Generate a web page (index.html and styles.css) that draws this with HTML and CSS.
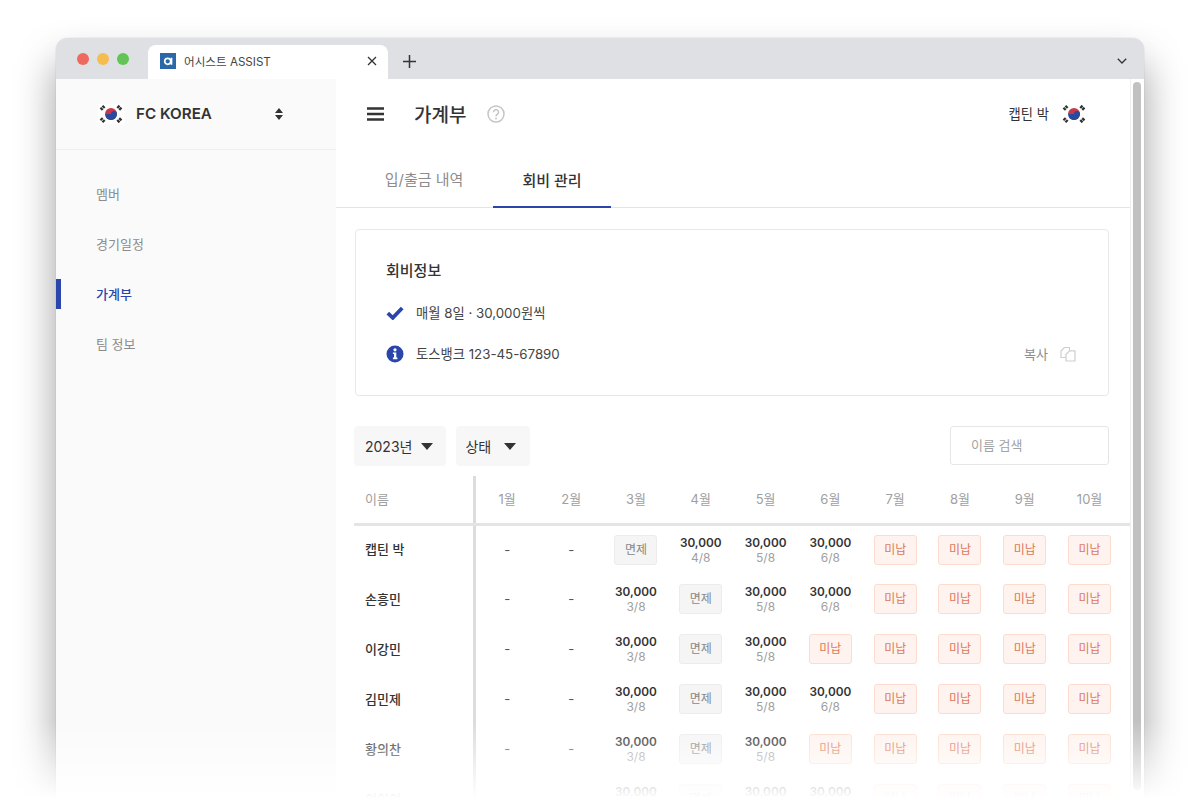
FILE: index.html
```html
<!DOCTYPE html>
<html lang="ko">
<head>
  <meta charset="UTF-8" />
  <meta name="viewport" content="width=device-width, initial-scale=1" />
  <title>어시스트 ASSIST</title>
  <link rel="stylesheet" href="styles.css">
</head>
<body>
  <svg class="svg-defs" width="0" height="0">
    <symbol id="flag" viewBox="0 0 26 20">
      <rect width="26" height="20" fill="#fff"/>
      <path d="M7 10a6 6 0 0 1 12 0z" fill="#c8384a"/>
      <path d="M7 10a6 6 0 0 0 12 0z" fill="#2b4a9c"/>
      <path d="M7 10a3 3 0 0 0 6 0a3 3 0 0 1 6 0a6 6 0 0 1-12 0z" fill="#2b4a9c"/>
      <g stroke="#333" stroke-width="3.200" stroke-dasharray="2.200 .6">
        <path d="M2.800 5.600L6.400 2M19.600 2l3.600 3.600M2.800 14.400L6.400 18M19.600 18l3.600-3.600"/>
      </g>
    </symbol>
  </svg>

  <div class="window">
    <div class="tabbar">
      <div class="lights">
        <span class="light red"></span>
        <span class="light yellow"></span>
        <span class="light green"></span>
      </div>
      <div class="browser-tab">
        <svg class="favicon" width="16" height="16" viewBox="0 0 16 16">
          <rect width="16" height="16" fill="#2a68a8"/>
          <circle cx="7.700" cy="8.300" r="3" stroke="#fff" stroke-width="1.700" fill="none"/>
          <path d="M11.500 4.700v7" stroke="#fff" stroke-width="1.700"/>
        </svg>
        <span class="browser-tab-title">어시스트 ASSIST</span>
        <svg class="tab-close" width="10" height="10" viewBox="0 0 10 10"><path d="M1 1l8 8M9 1l-8 8" stroke="#333" stroke-width="1.300" fill="none"/></svg>
      </div>
      <svg class="tab-new" width="13" height="13" viewBox="0 0 13 13"><path d="M6.500 0v13M0 6.500h13" stroke="#333" stroke-width="1.500" fill="none"/></svg>
      <svg class="tab-more" width="10" height="6" viewBox="0 0 10 6"><path d="M.8.8l4.200 4.200L9.200.8" stroke="#333" stroke-width="1.300" fill="none"/></svg>
    </div>

    <div class="app">
      <aside class="sidebar">
        <div class="team">
          <svg class="team-flag" width="26" height="20"><use href="#flag"/></svg>
          <span class="team-name">FC KOREA</span>
          <svg class="team-sort" width="8" height="12" viewBox="0 0 8 12"><path d="M4 0l4 5H0zM4 12L0 7h8z" fill="#333"/></svg>
        </div>
        <nav class="nav">
          <a class="nav-item">멤버</a>
          <a class="nav-item">경기일정</a>
          <a class="nav-item active">가계부</a>
          <a class="nav-item">팀 정보</a>
        </nav>
      </aside>

      <main class="main">
        <header class="topbar">
          <svg class="menu-icon" width="17" height="14" viewBox="0 0 17 14"><path d="M0 1.500h17M0 7h17M0 12.500h17" stroke="#333" stroke-width="2.600" fill="none"/></svg>
          <h1 class="page-title">가계부</h1>
          <svg class="help-icon" width="18" height="18" viewBox="0 0 18 18">
            <circle cx="9" cy="9" r="8" stroke="#c4c4c4" stroke-width="1.500" fill="none"/>
            <path d="M6.500 7.200a2.500 2.500 0 1 1 3.900 2c-.9.600-1.400 1-1.400 2" stroke="#c4c4c4" stroke-width="1.500" fill="none"/>
            <circle cx="9" cy="13.400" r="1" fill="#c4c4c4"/>
          </svg>
          <span class="user-name">캡틴 박</span>
          <svg class="user-flag" width="26" height="20"><use href="#flag"/></svg>
        </header>

        <div class="tabs">
          <a class="tab">입/출금 내역</a>
          <a class="tab active">회비 관리</a>
        </div>

        <section class="info-card">
          <h2 class="info-title">회비정보</h2>
          <div class="info-row">
            <svg width="18" height="14" viewBox="0 0 18 14"><path d="M1.800 7.200l5 4.600L16.200 2" stroke="#2a46ad" stroke-width="3.800" fill="none"/></svg>
            <span>매월 8일 · 30,000원씩</span>
          </div>
          <div class="info-row">
            <svg width="18" height="18" viewBox="0 0 18 18">
              <circle cx="9" cy="9" r="8.500" fill="#2a46ad"/>
              <circle cx="9" cy="4.800" r="1.600" fill="#fff"/>
              <path d="M6.900 7.400h3.400v5.200h1.100v1.600H6.900v-1.600h1.100V9H6.900z" fill="#fff"/>
            </svg>
            <span>토스뱅크 123-45-67890</span>
            <span class="copy">복사
              <svg width="17" height="16" viewBox="0 0 17 16"><path d="M6 11.500H1.500V5L5 1.500h5V4.500M6.500 15V8.500L10 4.800h5.500V15z" stroke="#cfcfcf" stroke-width="1.200" stroke-linejoin="round" fill="none"/></svg>
            </span>
          </div>
        </section>

        <div class="filters">
          <button type="button" class="filter">2023년 <i class="caret"></i></button>
          <button type="button" class="filter">상태 <i class="caret"></i></button>
          <input class="search" type="text" placeholder="이름 검색" />
        </div>

        <table class="dues">
          <thead>
            <tr>
              <th class="name">이름</th>
              <th>1월</th><th>2월</th><th>3월</th><th>4월</th><th>5월</th>
              <th>6월</th><th>7월</th><th>8월</th><th>9월</th><th>10월</th>
              <th class="rest"></th>
            </tr>
          </thead>
          <tbody>
            <tr>
              <td class="name">캡틴 박</td>
              <td>-</td><td>-</td>
              <td><span class="badge exempt">면제</span></td>
              <td><b class="paid">30,000</b><span class="paid-date">4/8</span></td>
              <td><b class="paid">30,000</b><span class="paid-date">5/8</span></td>
              <td><b class="paid">30,000</b><span class="paid-date">6/8</span></td>
              <td><span class="badge unpaid">미납</span></td>
              <td><span class="badge unpaid">미납</span></td>
              <td><span class="badge unpaid">미납</span></td>
              <td><span class="badge unpaid">미납</span></td>
              <td></td>
            </tr>
            <tr>
              <td class="name">손흥민</td>
              <td>-</td><td>-</td>
              <td><b class="paid">30,000</b><span class="paid-date">3/8</span></td>
              <td><span class="badge exempt">면제</span></td>
              <td><b class="paid">30,000</b><span class="paid-date">5/8</span></td>
              <td><b class="paid">30,000</b><span class="paid-date">6/8</span></td>
              <td><span class="badge unpaid">미납</span></td>
              <td><span class="badge unpaid">미납</span></td>
              <td><span class="badge unpaid">미납</span></td>
              <td><span class="badge unpaid">미납</span></td>
              <td></td>
            </tr>
            <tr>
              <td class="name">이강민</td>
              <td>-</td><td>-</td>
              <td><b class="paid">30,000</b><span class="paid-date">3/8</span></td>
              <td><span class="badge exempt">면제</span></td>
              <td><b class="paid">30,000</b><span class="paid-date">5/8</span></td>
              <td><span class="badge unpaid">미납</span></td>
              <td><span class="badge unpaid">미납</span></td>
              <td><span class="badge unpaid">미납</span></td>
              <td><span class="badge unpaid">미납</span></td>
              <td><span class="badge unpaid">미납</span></td>
              <td></td>
            </tr>
            <tr>
              <td class="name">김민제</td>
              <td>-</td><td>-</td>
              <td><b class="paid">30,000</b><span class="paid-date">3/8</span></td>
              <td><span class="badge exempt">면제</span></td>
              <td><b class="paid">30,000</b><span class="paid-date">5/8</span></td>
              <td><b class="paid">30,000</b><span class="paid-date">6/8</span></td>
              <td><span class="badge unpaid">미납</span></td>
              <td><span class="badge unpaid">미납</span></td>
              <td><span class="badge unpaid">미납</span></td>
              <td><span class="badge unpaid">미납</span></td>
              <td></td>
            </tr>
            <tr>
              <td class="name">황의찬</td>
              <td>-</td><td>-</td>
              <td><b class="paid">30,000</b><span class="paid-date">3/8</span></td>
              <td><span class="badge exempt">면제</span></td>
              <td><b class="paid">30,000</b><span class="paid-date">5/8</span></td>
              <td><span class="badge unpaid">미납</span></td>
              <td><span class="badge unpaid">미납</span></td>
              <td><span class="badge unpaid">미납</span></td>
              <td><span class="badge unpaid">미납</span></td>
              <td><span class="badge unpaid">미납</span></td>
              <td></td>
            </tr>
            <tr>
              <td class="name">이이이</td>
              <td>-</td><td>-</td>
              <td><b class="paid">30,000</b><span class="paid-date">3/8</span></td>
              <td><span class="badge exempt">면제</span></td>
              <td><b class="paid">30,000</b><span class="paid-date">5/8</span></td>
              <td><b class="paid">30,000</b><span class="paid-date">6/8</span></td>
              <td><span class="badge unpaid">미납</span></td>
              <td><span class="badge unpaid">미납</span></td>
              <td><span class="badge unpaid">미납</span></td>
              <td><span class="badge unpaid">미납</span></td>
              <td></td>
            </tr>
          </tbody>
        </table>
      </main>

      <div class="scrollbar"><div class="scroll-thumb"></div></div>
    </div>
  </div>

  <div class="fade"></div>
</body>
</html>
```

FILE: styles.css
```css
* {
  box-sizing: border-box;
}
html, body {
  margin: 0;
  height: 800px;
  overflow: hidden;
}
body {
  position: relative;
  padding: 38px 56px 0;
  background: #fff;
  font-family: Inter, "Noto Sans CJK KR", sans-serif;
  color: #333;
}
.svg-defs {
  position: absolute;
}
.window {
  width: 1088px;
  height: 800px;
  border-radius: 12px 12px 0 0;
  overflow: hidden;
  background: #fff;
  box-shadow: 0 0 1px rgba(0, 0, 0, 0.35), 0 24px 40px rgba(0, 0, 0, 0.38);
}

/* browser chrome */
.tabbar {
  display: flex;
  align-items: flex-end;
  height: 41px;
  padding-left: 21px;
  background: #dfe0e4;
}
.lights {
  display: flex;
  gap: 8px;
  align-self: flex-start;
  margin-top: 15px;
  width: 71px;
}
.light {
  width: 12px;
  height: 12px;
  border-radius: 50%;
}
.red { background: #ee6a5f; }
.yellow { background: #f5bd4f; }
.green { background: #61c454; }
.browser-tab {
  display: flex;
  align-items: center;
  width: 240px;
  height: 34px;
  padding: 0 11px 2px 12px;
  background: #fff;
  border-radius: 8px 8px 0 0;
}
.favicon {
  flex-shrink: 0;
  margin-right: 8px;
}
.browser-tab-title {
  flex: 1;
  font-size: 11.6px;
  color: #444;
}
.tab-new {
  margin: 0 0 11px 15px;
}
.tab-more {
  margin: 0 17px 15px auto;
}

/* app */
.app {
  display: flex;
  height: 759px;
}
.sidebar {
  width: 280px;
  flex-shrink: 0;
  background: #fafafa;
}
.team {
  display: flex;
  align-items: center;
  height: 71px;
  padding: 0 53px 1px 42px;
  border-bottom: 1px solid #eee;
}
.team-name {
  flex: 1;
  margin-left: 12px;
  font-size: 15.2px;
  font-weight: 600;
}
.nav {
  display: flex;
  flex-direction: column;
  padding-top: 20px;
}
.nav-item {
  height: 50px;
  padding-left: 40px;
  font-size: 13px;
  line-height: 48px;
  color: #8c8c8c;
}
.nav-item.active {
  position: relative;
  color: #2a46ad;
  font-weight: 500;
}
.nav-item.active::before {
  content: "";
  position: absolute;
  left: 0;
  top: 9px;
  width: 5px;
  height: 30px;
  background: #2a46ad;
}

.main {
  flex: 1;
  min-width: 0;
  background: #fff;
}
.topbar {
  display: flex;
  align-items: center;
  height: 70px;
  padding: 0 43px 0 31px;
}
.page-title {
  margin: 0 0 2px 30px;
  font-size: 19px;
  font-weight: 500;
  color: #333;
}
.help-icon {
  margin-left: 21px;
}
.user-name {
  margin: 0 0 2px auto;
  font-size: 13.300px;
  font-weight: 400;
}
.user-flag {
  margin-left: 12px;
}
.tabs {
  display: flex;
  gap: 10px;
  height: 59px;
  padding: 6px 0 0 29px;
  border-bottom: 1px solid #e4e4e4;
}
.tab {
  width: 118px;
  height: 53px;
  font-size: 15px;
  line-height: 50px;
  text-align: center;
  color: #8c8c8c;
}
.tab.active {
  color: #333;
  font-weight: 500;
  line-height: 52px;
  border-bottom: 2px solid #2a46ad;
}
.info-card {
  display: flex;
  flex-direction: column;
  width: 754px;
  height: 167px;
  margin: 21px 0 0 19px;
  padding: 30px 31px 0 30px;
  border: 1px solid #e8e8e8;
  border-radius: 4px;
}
.info-title {
  margin: 0 0 11px;
  font-size: 15px;
  font-weight: 500;
  line-height: 21px;
  color: #333;
}
.info-row {
  display: flex;
  align-items: center;
  gap: 12px;
  height: 41px;
  font-size: 13.300px;
  color: #444;
}
.info-row svg {
  width: 18px;
  flex-shrink: 0;
}
.copy {
  display: flex;
  align-items: center;
  gap: 11px;
  margin-left: auto;
  font-size: 13px;
  color: #8c8c8c;
}
.filters {
  display: flex;
  gap: 10px;
  width: 755px;
  margin: 30px 0 0 18px;
}
.filter {
  display: flex;
  align-items: center;
  gap: 9px;
  height: 40px;
  padding: 0 13px 0 11px;
  border: none;
  border-radius: 4px;
  background: #f7f7f7;
  font: inherit;
  font-size: 14px;
  color: #333;
}
.caret {
  width: 0;
  height: 0;
  border-left: 6.500px solid transparent;
  border-right: 6.500px solid transparent;
  border-top: 7px solid #333;
}
.filter + .filter {
  gap: 13px;
  padding: 0 14px 0 9px;
}
.search {
  width: 159px;
  height: 39px;
  margin-left: auto;
  padding: 0 20px 2px;
  border: 1px solid #e6e6e6;
  border-radius: 3px;
  font: inherit;
  font-size: 13px;
}
.search::placeholder {
  color: #a3a3a3;
}
.dues {
  width: 776px;
  margin: 10px 0 0 18px;
  border-collapse: collapse;
  table-layout: fixed;
  font-size: 13px;
}
.dues th {
  width: 64.800px;
  height: 48px;
  padding: 0 0 1px;
  border-bottom: 3px solid #e4e4e4;
  font-weight: 400;
  color: #a0a0a0;
  text-align: center;
}
.dues th.rest {
  width: auto;
}
.dues td {
  height: 50px;
  padding: 0;
  text-align: center;
  color: #555;
}
.dues .name {
  width: 120px;
  padding-left: 11px;
  border-right: 3px solid #dcdcdc;
  text-align: left;
}
.dues td.name {
  padding-bottom: 2px;
  font-weight: 500;
  color: #333;
}
.paid {
  display: block;
  padding-top: 1px;
  font-size: 11.800px;
  font-weight: 600;
  line-height: 14px;
  color: #333;
}
.paid-date {
  display: block;
  font-size: 12px;
  line-height: 15px;
  color: #a0a0a0;
}
.badge {
  display: inline-block;
  width: 43px;
  height: 30px;
  border-radius: 3px;
  font-size: 12px;
  line-height: 28px;
  text-align: center;
  vertical-align: middle;
}
.exempt {
  background: #f5f5f5;
  border: 1px solid #ececec;
  color: #888;
}
.unpaid {
  background: #fef3ee;
  border: 1px solid #fbdccf;
  color: #e0785a;
}
.scrollbar {
  width: 14px;
  flex-shrink: 0;
  padding: 3px 3px 0 2px;
  border-left: 1px solid #eee;
  background: #fff;
}
.scroll-thumb {
  height: 708px;
  border-radius: 4px;
  background: #c1c1c1;
}
.fade {
  position: absolute;
  left: 0;
  right: 0;
  bottom: 0;
  height: 78px;
  background: linear-gradient(to bottom, rgba(255, 255, 255, 0), rgba(255, 255, 255, 0.35) 35%, #fff 98%);
}
```
